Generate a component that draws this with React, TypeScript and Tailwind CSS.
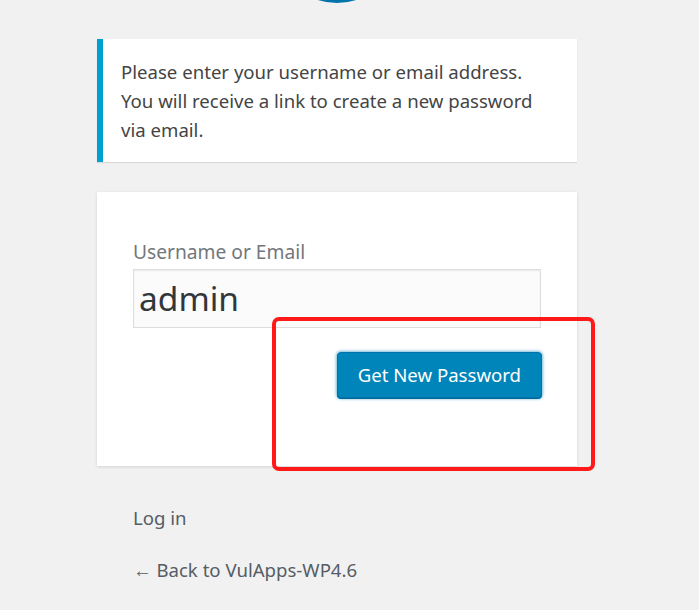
import React from 'react';

const App: React.FC = () => {
  return (
    <div className="relative w-[699px] h-[610px] overflow-hidden bg-[#f1f1f1] font-['Noto_Sans',sans-serif]">
      {/* logo, only its lower edge shows */}
      <div className="absolute left-[274px] top-[-123px] w-[126px] h-[126px] rounded-full bg-[#0073aa]" />

      <div className="ml-[97px] w-[480px] pt-[39px]">
        {/* message */}
        <div className="bg-white border-l-[6px] border-[#00a0d2] shadow-[0_1px_1px_0_rgba(0,0,0,0.1)] py-[18px] pl-[18px] pr-[18px]">
          <p className="text-[18.6px] leading-[29px] text-[#444]">
            Please enter your username or email address.
            <br />
            You will receive a link to create a new password via email.
          </p>
        </div>

        {/* form */}
        <form className="mt-[30px] bg-white shadow-[0_1px_3px_rgba(0,0,0,0.13)] pt-[44px] px-[36px] pb-[68px]">
          <label className="block text-[19.2px] leading-[31px] text-[#72777c]">Username or Email</label>
          <div className="mt-[2px] h-[59px] border border-[#ddd] bg-[#fbfbfb] shadow-[inset_0_1px_2px_rgba(0,0,0,0.07)] flex items-center px-[5px]">
            <span className="text-[33.5px] text-[#32373c] leading-none">admin</span>
          </div>
          <div className="mt-[24px] flex justify-end">
            <button
              type="button"
              className="h-[46px] px-[20px] rounded-[4px] bg-[#0085ba] border border-[#0073aa] text-white text-[18.6px] shadow-[0_1px_0_#006799,0_0_3px_1px_rgba(30,140,190,0.6)] mr-[-1px]"
            >
              Get New Password
            </button>
          </div>
        </form>

        {/* links */}
        <div className="pt-[37px] pl-[36px] text-[18.6px] leading-[29px] text-[#555d66]">
          <p>Log in</p>
          <p className="mt-[23px]">← Back to VulApps-WP4.6</p>
        </div>
      </div>

      {/* red annotation box */}
      <div className="absolute left-[272px] top-[317px] w-[323px] h-[154px] border-[4px] border-[#ff1a1a] rounded-[7px]" />
    </div>
  );
};

export default App;
